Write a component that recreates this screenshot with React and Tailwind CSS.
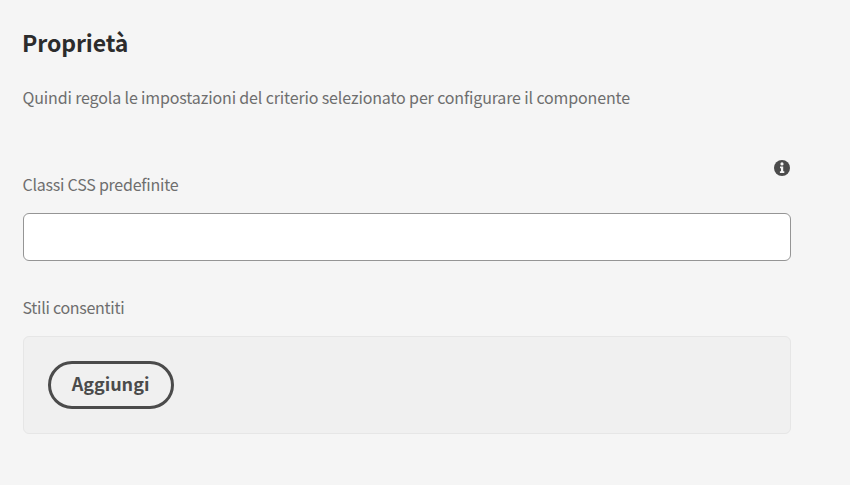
function InfoIcon() {
  return (
    <svg className="block h-4 w-4" viewBox="0 0 16 16" aria-hidden="true">
      <circle cx="8" cy="8" r="8" fill="#4b4b4b" />
      <circle cx="8" cy="3.9" r="1.6" fill="#f5f5f5" />
      <path d="M6 6.5h3.2v4.7H10.3V13H5.9v-1.8H7V8.2H6z" fill="#f5f5f5" />
    </svg>
  );
}

export default function App() {
  return (
    <main className="h-[485px] w-[850px] overflow-hidden bg-[#f5f5f5] pl-[23px] font-['Noto_Sans_CJK_SC','Noto_Sans',sans-serif] text-[#6e6e6e]">
      <div className="w-[768px]">
        <h1 className="-ml-px pt-[26px] text-[23px] leading-8 font-bold tracking-[-0.1px] text-[#2c2c2c]">
          <span>Proprietà</span>
        </h1>
        <p className="mt-[27px] -ml-[0.5px] text-[16px] leading-6 tracking-[-0.14px] whitespace-nowrap">
          <span>Quindi regola le impostazioni del criterio selezionato per configurare il componente</span>
        </p>
        <div className="mt-[51px] flex h-[53px] items-start justify-between">
          <label htmlFor="classes" className="mt-[12px] -ml-[0.5px] text-[16px] leading-6 tracking-[-0.23px]">
            <span>Classi CSS predefinite</span>
          </label>
          <button className="mr-[1px]" aria-label="Info"><InfoIcon /></button>
        </div>
        <input id="classes" className="block h-12 w-full rounded-md border border-[#959595] bg-white px-3 outline-none" />
        <div className="mt-[34px] -ml-[0.5px] text-[16px] leading-6 tracking-[-0.28px]">
          <span>Stili consentiti</span>
        </div>
        <section className="mt-[17px] flex h-[98px] items-center rounded-md border border-[#e6e6e6] bg-[#f0f0f0] pl-6">
          <button className="flex h-12 w-[126px] items-center justify-center rounded-full border-3 border-[#4b4b4b] pr-px pb-1 text-[18px] leading-6 font-bold text-[#4b4b4b]">
            <span>Aggiungi</span>
          </button>
        </section>
      </div>
    </main>
  );
}
